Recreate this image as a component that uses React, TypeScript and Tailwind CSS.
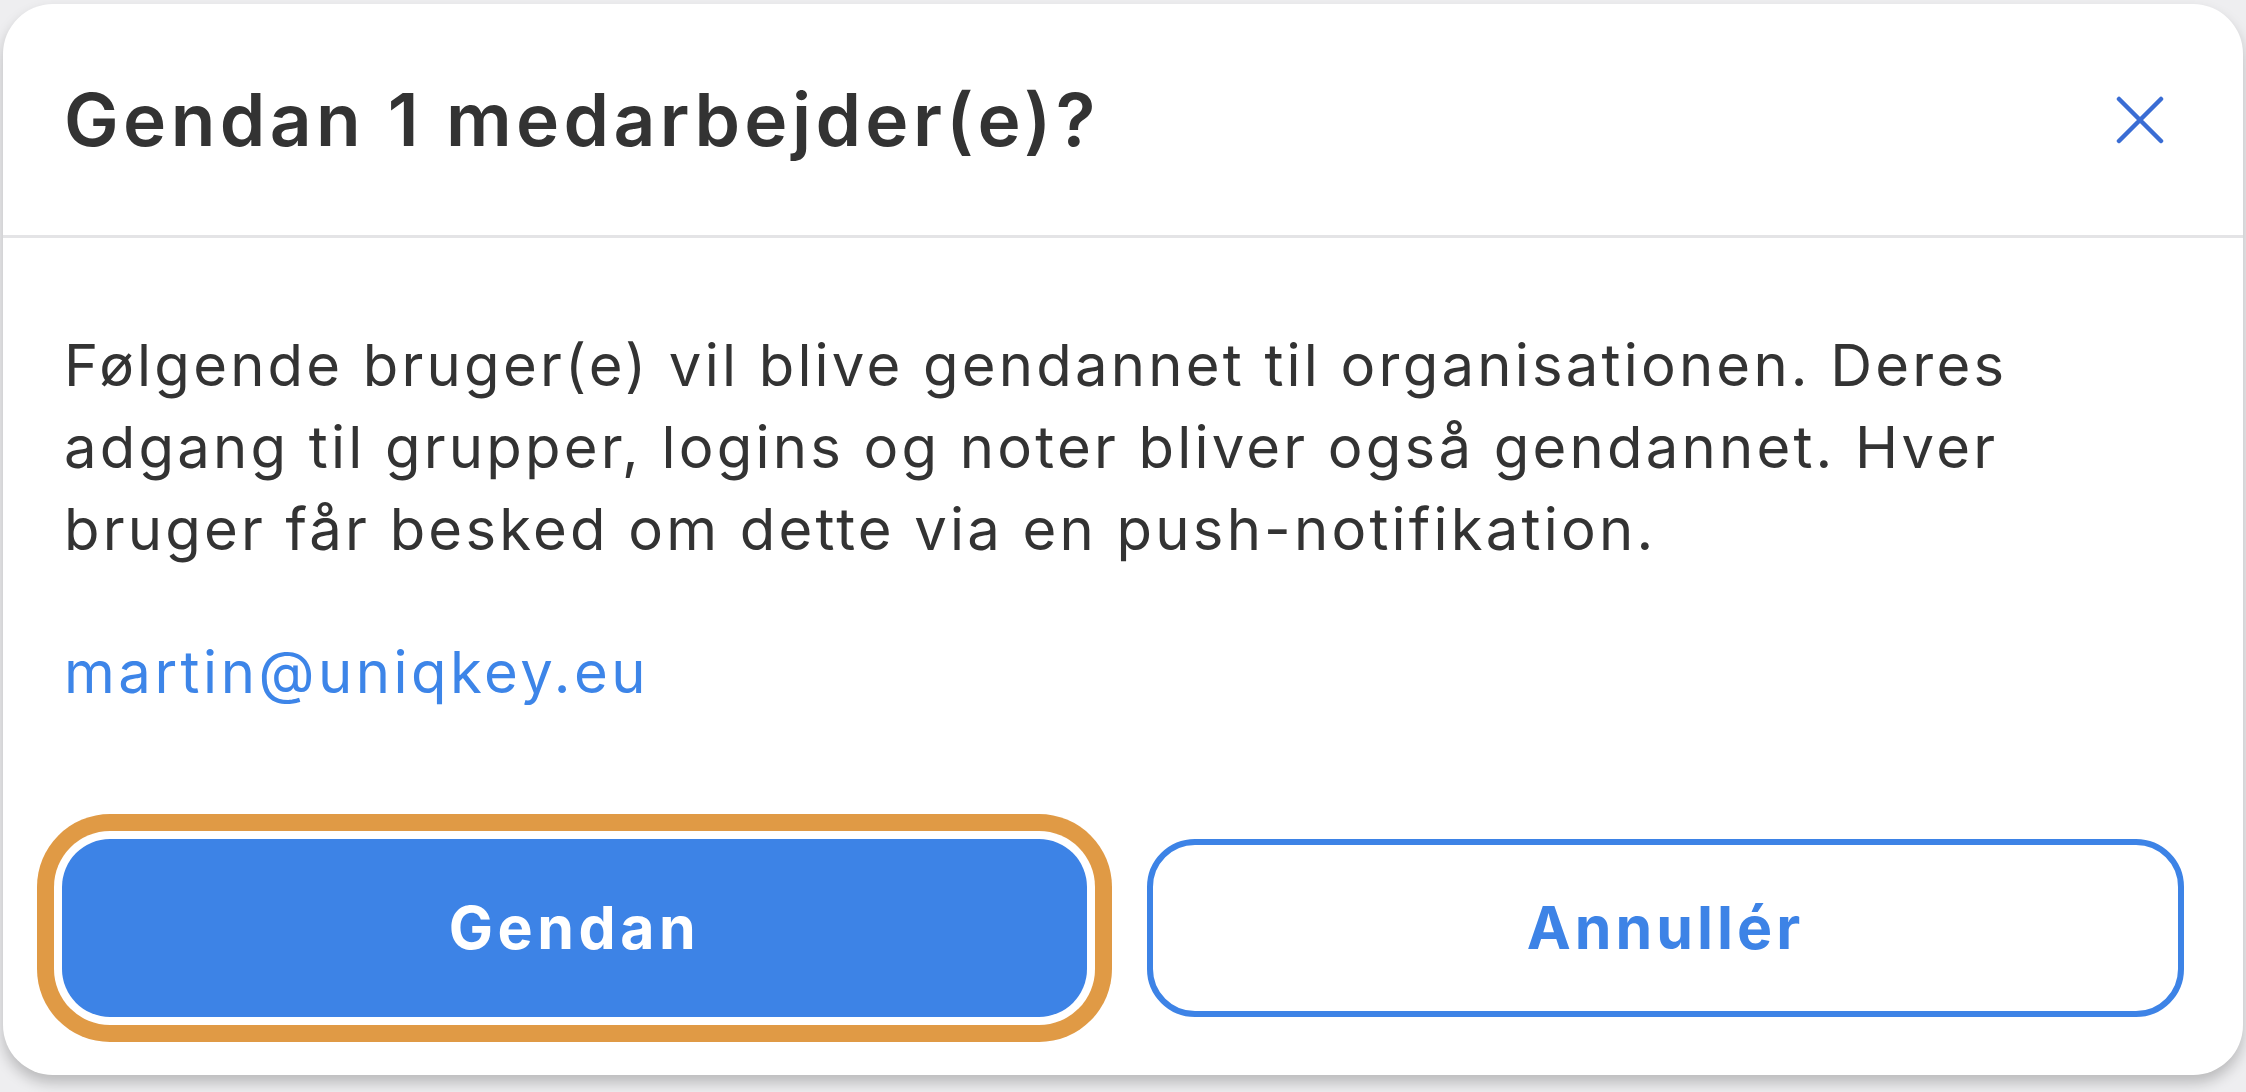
import React from "react";

export default function App() {
  return (
    <div
      className="w-[2246px] h-[1092px] bg-[#eeeef0] pt-[4px] pl-[3px] overflow-hidden"
      style={{ fontFamily: "Inter, 'Open Sans', sans-serif" }}
    >
      <div className="w-[2240px] h-[1071px] bg-white rounded-[50px] shadow-[0_8px_14px_rgba(0,0,0,0.22)] flex flex-col">
        <div className="h-[234px] flex items-center justify-between pl-[61px] pr-[79px] border-b-[3px] border-[#e4e4e6]">
          <h1 className="text-[73px] font-semibold text-[#333333] tracking-[4.4px] leading-none whitespace-nowrap">
            Gendan 1 medarbejder(e)?
          </h1>
          <button className="w-[48px] h-[48px] flex items-center justify-center" aria-label="Luk">
            <svg width="48" height="48" viewBox="0 0 48 48" fill="none">
              <path
                d="M3 3L45 45M45 3L3 45"
                stroke="#3a6dd4"
                strokeWidth="4.5"
                strokeLinecap="round"
              />
            </svg>
          </button>
        </div>
        <div className="px-[61px] pt-[86px] text-[58px] leading-[82px] text-[#333333]">
          <p className="tracking-[3.2px] whitespace-nowrap">
            Følgende bruger(e) vil blive gendannet til organisationen. Deres
            <br />
            adgang til grupper, logins og noter bliver også gendannet. Hver
            <br />
            bruger får besked om dette via en push-notifikation.
          </p>
          <p className="mt-[61px] text-[#3d85e8] tracking-[3.5px]">martin@uniqkey.eu</p>
        </div>
        <div className="flex gap-[60px] px-[59px] mt-auto pb-[58px]">
          <button className="flex-1 h-[178px] rounded-[48px] bg-[#3d83e6] text-white text-[59px] font-bold tracking-[4.5px] shadow-[0_0_0_8px_#ffffff,0_0_0_25px_#e09a45]">
            Gendan
          </button>
          <button className="flex-1 h-[178px] rounded-[48px] bg-white border-[6px] border-[#3d83e6] text-[#3d83e6] text-[59px] font-bold tracking-[4px]">
            Annullér
          </button>
        </div>
      </div>
    </div>
  );
}
